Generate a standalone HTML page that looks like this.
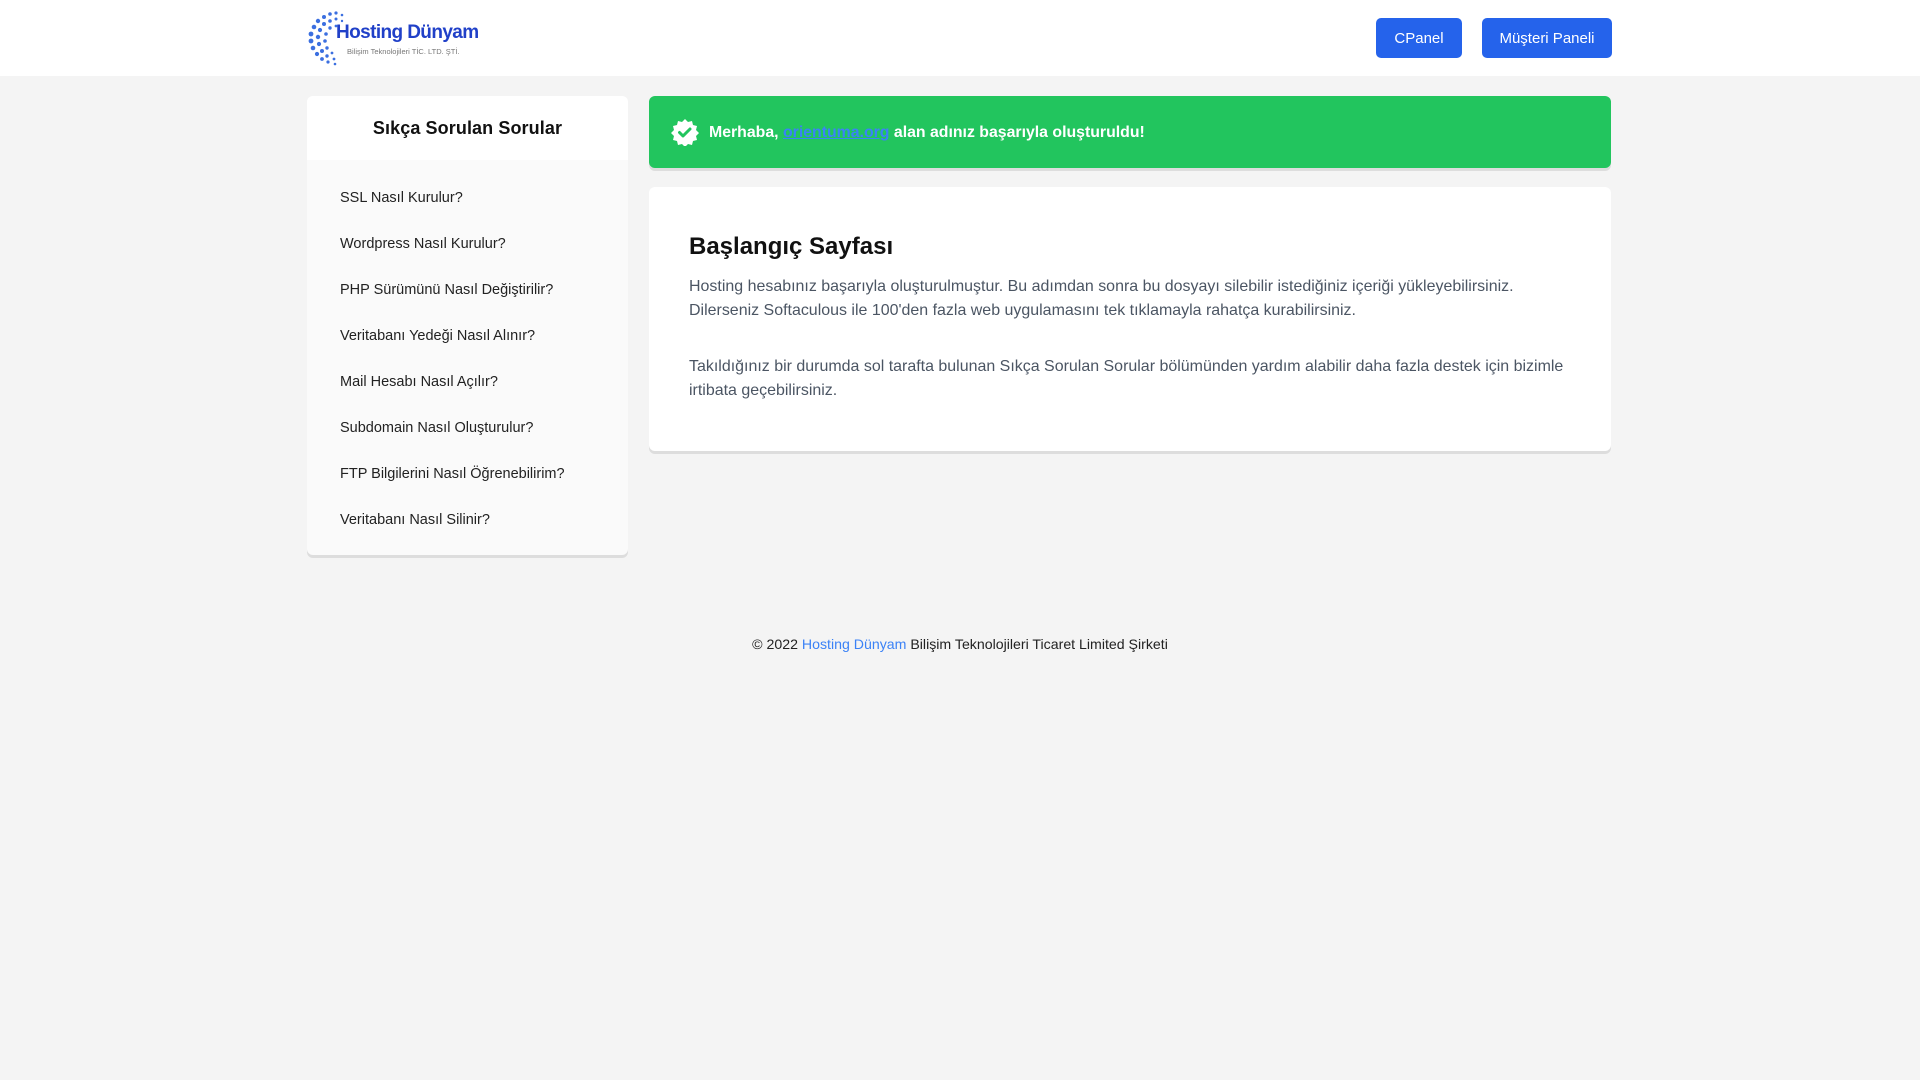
<!DOCTYPE html>
<html><head><meta charset="utf-8"><style>
*{margin:0;padding:0;box-sizing:border-box}
body{width:1920px;height:1080px;background:#f4f4f4;font-family:"Liberation Sans",Arial,sans-serif;position:relative;overflow:hidden}
.hdr{position:absolute;left:0;top:0;width:1920px;height:76px;background:#fff}
.btn{position:absolute;top:18px;height:40px;background:#2563eb;color:#fff;border-radius:5px;font-size:15px;line-height:41px;text-align:center}
.side{position:absolute;left:307px;top:96px;width:321px;height:459px;background:#fafafa;border-radius:6px;box-shadow:0 3px 0 #ddd;overflow:hidden}
.side .t{height:64px;background:#fff;text-align:center;font-weight:bold;font-size:18px;line-height:64px;color:#111;letter-spacing:.1px}
.side ul{list-style:none;padding-top:15px}
.side li{height:46px;line-height:46px;padding-left:33px;font-size:14.5px;color:#222}
.alert{position:absolute;left:649px;top:96px;width:962px;height:72px;background:#22c55e;border-radius:6px;box-shadow:0 3px 0 #ddd;color:#fff;font-weight:bold;font-size:15.85px}
.alert svg{position:absolute;left:22px;top:22px}
.alert span{position:absolute;left:60px;top:27px;line-height:20px}
.alert a{color:#3b82f6;text-decoration:underline}
.card{position:absolute;left:649px;top:187px;width:962px;height:264px;background:#fff;border-radius:6px;box-shadow:0 3px 0 #ddd;padding:45px 40px}
.card h1{font-size:24px;color:#111;line-height:30px;margin-bottom:13px}
.card p{font-size:15.97px;line-height:24px;color:#4b5563;margin-bottom:32px}
.foot{position:absolute;top:634px;left:0;width:1920px;text-align:center;font-size:14.15px;color:#222;line-height:20px}
.foot a{color:#3b82f6}
</style></head><body>
<div class="hdr">
<svg style="position:absolute;left:306px;top:9px" width="60" height="58" viewBox="0 0 60 58">
<g fill="#3b6fe0">
<circle cx="30" cy="4" r="1.6"/><circle cx="24" cy="5" r="1.8"/><circle cx="18" cy="8" r="2"/><circle cx="12" cy="12" r="2.2"/><circle cx="8" cy="18" r="2.3"/><circle cx="5" cy="25" r="2.4"/><circle cx="5" cy="32" r="2.4"/><circle cx="7" cy="39" r="2.3"/><circle cx="11" cy="45" r="2.1"/><circle cx="16" cy="50" r="1.9"/><circle cx="22" cy="53" r="1.6"/><circle cx="29" cy="55" r="1.3"/>
<circle cx="30" cy="10" r="1.5"/><circle cx="24" cy="12" r="1.8"/><circle cx="18" cy="15" r="2"/><circle cx="14" cy="21" r="2.1"/><circle cx="12" cy="28" r="2.2"/><circle cx="13" cy="35" r="2.1"/><circle cx="16" cy="42" r="2"/><circle cx="21" cy="47" r="1.7"/><circle cx="28" cy="50" r="1.4"/>
<circle cx="30" cy="17" r="1.4"/><circle cx="24" cy="19" r="1.7"/><circle cx="20" cy="25" r="1.8"/><circle cx="19" cy="32" r="1.8"/><circle cx="21" cy="39" r="1.7"/><circle cx="26" cy="44" r="1.4"/>
<circle cx="36" cy="6" r="1.3"/><circle cx="36" cy="12" r="1.2"/></g></svg>
<div style="position:absolute;left:336px;top:22px;font-size:19px;font-weight:bold;color:#2040c8;letter-spacing:-.6px">Hosting Dünyam</div>
<div style="position:absolute;left:347px;top:47px;font-size:7.5px;color:#777">Bilişim Teknolojileri TİC. LTD. ŞTİ.</div>
<div class="btn" style="left:1376px;width:86px">CPanel</div>
<div class="btn" style="left:1482px;width:130px">Müşteri Paneli</div>
</div>
<div class="side"><div class="t">Sıkça Sorulan Sorular</div><ul>
<li>SSL Nasıl Kurulur?</li><li>Wordpress Nasıl Kurulur?</li><li>PHP Sürümünü Nasıl Değiştirilir?</li><li>Veritabanı Yedeği Nasıl Alınır?</li><li>Mail Hesabı Nasıl Açılır?</li><li>Subdomain Nasıl Oluşturulur?</li><li>FTP Bilgilerini Nasıl Öğrenebilirim?</li><li>Veritabanı Nasıl Silinir?</li></ul></div>
<div class="alert"><svg width="28" height="28" viewBox="0 0 28 28"><path fill="#fff" d="M14 1l3 3 4-1 1 4 4 1-1 4 3 3-3 3 1 4-4 1-1 4-4-1-3 3-3-3-4 1-1-4-4-1 1-4-3-3 3-3-1-4 4-1 1-4 4 1z"/><path d="M8.5 14.5l3.5 3.5 7-7" stroke="#22c55e" stroke-width="3" fill="none" stroke-linecap="round" stroke-linejoin="round"/></svg><span>Merhaba, <a>orientuma.org</a> alan adınız başarıyla oluşturuldu!</span></div>
<div class="card"><h1>Başlangıç Sayfası</h1>
<p>Hosting hesabınız başarıyla oluşturulmuştur. Bu adımdan sonra bu dosyayı silebilir istediğiniz içeriği yükleyebilirsiniz. Dilerseniz Softaculous ile 100'den fazla web uygulamasını tek tıklamayla rahatça kurabilirsiniz.</p>
<p>Takıldığınız bir durumda sol tarafta bulunan Sıkça Sorulan Sorular bölümünden yardım alabilir daha fazla destek için bizimle irtibata geçebilirsiniz.</p></div>
<div class="foot">© 2022 <a>Hosting Dünyam</a> Bilişim Teknolojileri Ticaret Limited Şirketi</div>
</body></html>
